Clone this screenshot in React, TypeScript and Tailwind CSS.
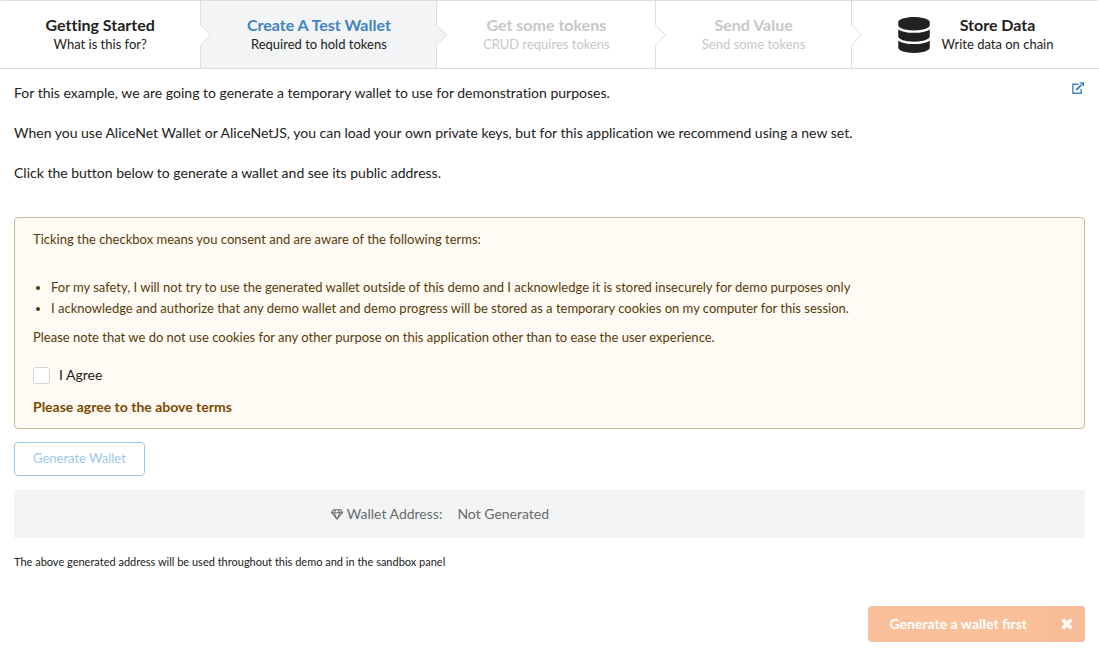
import { useState, type ReactNode } from "react";
import { FaDatabase, FaRegGem } from "react-icons/fa";

type Step = {
  title: string;
  description: string;
  state?: "active" | "disabled";
  icon?: ReactNode;
};

const steps: Step[] = [
  { title: "Getting Started", description: "What is this for?" },
  { title: "Create A Test Wallet", description: "Required to hold tokens", state: "active" },
  { title: "Get some tokens", description: "CRUD requires tokens", state: "disabled" },
  { title: "Send Value", description: "Send some tokens", state: "disabled" },
  {
    title: "Store Data",
    description: "Write data on chain",
    icon: <FaDatabase className="mr-3 h-9 w-8 shrink-0" aria-hidden="true" />,
  },
];

function StepItem({ step, last }: { step: Step; last: boolean }) {
  const active = step.state === "active";
  const disabled = step.state === "disabled";
  return (
    <li
      className={`relative flex flex-auto border-[#dedede] ${last ? "" : "border-r"} ${
        active ? "bg-[#f3f4f5]" : "bg-white"
      }`}
    >
      <button
        type="button"
        disabled={disabled}
        aria-current={active ? "step" : undefined}
        className={`flex flex-1 items-center justify-center px-7 py-[15px] ${
          disabled ? "text-[#c7c7c7]" : "text-[#212121]"
        }`}
      >
        {step.icon}
        <span className="flex flex-col items-center gap-px whitespace-nowrap">
          <span className={`text-[16px] leading-[18px] font-bold ${active ? "text-[#4183c4]" : ""}`}>
            {step.title}
          </span>
          <span className="text-[13px] leading-[18px]">{step.description}</span>
        </span>
      </button>
      {!last && (
        <span
          className={`absolute top-1/2 right-0 z-10 size-4 translate-x-1/2 -translate-y-1/2 rotate-45 border-t border-r border-[#dedede] [clip-path:polygon(0_0,100%_0,100%_100%)] ${
            active ? "bg-[#f3f4f5]" : "bg-white"
          }`}
        />
      )}
    </li>
  );
}

function ExternalIcon() {
  return (
    <svg viewBox="0 0 12 12" className="size-3" fill="none" stroke="currentColor" aria-hidden="true">
      <path d="M6.5 2.2H.9v9H9.2V7" strokeWidth="1.4" />
      <path d="M4.2 8l5-5" strokeWidth="2" />
      <path d="M7.2.3H12v4.5z" fill="currentColor" stroke="none" />
    </svg>
  );
}

function CrossIcon() {
  return (
    <svg viewBox="0 0 12 12" className="size-3" stroke="currentColor" strokeWidth="3.6" aria-hidden="true">
      <path d="M1.8 1.8l8.4 8.4M10.2 1.8l-8.4 8.4" />
    </svg>
  );
}

export default function App() {
  const [agreed, setAgreed] = useState(false);

  return (
    <div className="bg-white font-[Lato,sans-serif] text-[14px] leading-5 text-[#212121] [font-variant-ligatures:no-common-ligatures]">
      <nav aria-label="Progress">
        <ol className="flex rounded-t-[2px] border-y border-[#dedede]">
          {steps.map((step, i) => (
            <StepItem key={step.title} step={step} last={i === steps.length - 1} />
          ))}
        </ol>
      </nav>

      <main className="px-[14px] pt-[14px] pb-[14px]">
        <div className="flex items-start justify-between">
          <div className="flex flex-col gap-5">
            <p>For this example, we are going to generate a temporary wallet to use for demonstration purposes.</p>
            <p>
              When you use AliceNet Wallet or AliceNetJS, you can load your own private keys, but for this
              application we recommend using a new set.
            </p>
            <p>Click the button below to generate a wallet and see its public address.</p>
          </div>
          <a href="#docs" aria-label="Open documentation" className="-mt-px pr-px text-[#4183c4]">
            <ExternalIcon />
          </a>
        </div>

        <section className="mt-[34px] rounded-[4px] border border-[#c9ba9b] bg-[#fffaf3] px-[18px] py-[11px] text-[13px] text-[#573a08]">
          <p>Ticking the checkbox means you consent and are aware of the following terms:</p>
          <ul className="mt-7 list-disc pl-[18px] leading-[21px]">
            <li>
              For my safety, I will not try to use the generated wallet outside of this demo and I acknowledge it is
              stored insecurely for demo purposes only
            </li>
            <li>
              I acknowledge and authorize that any demo wallet and demo progress will be stored as a temporary cookies
              on my computer for this session.
            </li>
          </ul>
          <p className="mt-2">
            Please note that we do not use cookies for any other purpose on this application other than to ease the
            user experience.
          </p>
          <label className="mt-[18px] flex w-fit items-center gap-[9px] text-[14px] text-[#212121]">
            <input
              type="checkbox"
              checked={agreed}
              onChange={(e) => setAgreed(e.target.checked)}
              className="size-[17px] appearance-none rounded-[3px] border border-[#d4d4d5] bg-white checked:bg-[#4183c4]"
            />
            I Agree
          </label>
          <p className="mt-3 text-[14px] font-bold text-[#794b02]">Please agree to the above terms</p>
        </section>

        <button
          type="button"
          disabled={!agreed}
          className="mt-[13px] block h-[34px] rounded-[4px] border border-[#2185d0] px-[18px] pb-[2px] text-[13px] text-[#2185d0] disabled:opacity-45"
        >
          Generate Wallet
        </button>

        <div className="mt-[14px] grid h-12 grid-cols-5 items-center bg-[#f3f4f5] text-[#6a6b6c]">
          <div className="col-span-2 flex items-center justify-end gap-1">
            <FaRegGem className="h-[11px] w-3" aria-hidden="true" />
            <span>Wallet Address:</span>
          </div>
          <div className="col-span-3 pl-[15px]">Not Generated</div>
        </div>

        <p className="mt-[14px] text-[11px]">
          The above generated address will be used throughout this demo and in the sandbox panel
        </p>

        <div className="mt-[34px] flex justify-end">
          <button
            type="button"
            disabled
            className="flex h-9 items-stretch overflow-hidden rounded-[4px] bg-[#f9c09a] font-bold text-white [font-variant-ligatures:normal]"
          >
            <span className="flex items-center px-[21px]">Generate a wallet first</span>
            <span className="flex w-[37px] items-center justify-center bg-[#f7bc98]">
              <CrossIcon />
            </span>
          </button>
        </div>
      </main>
    </div>
  );
}
